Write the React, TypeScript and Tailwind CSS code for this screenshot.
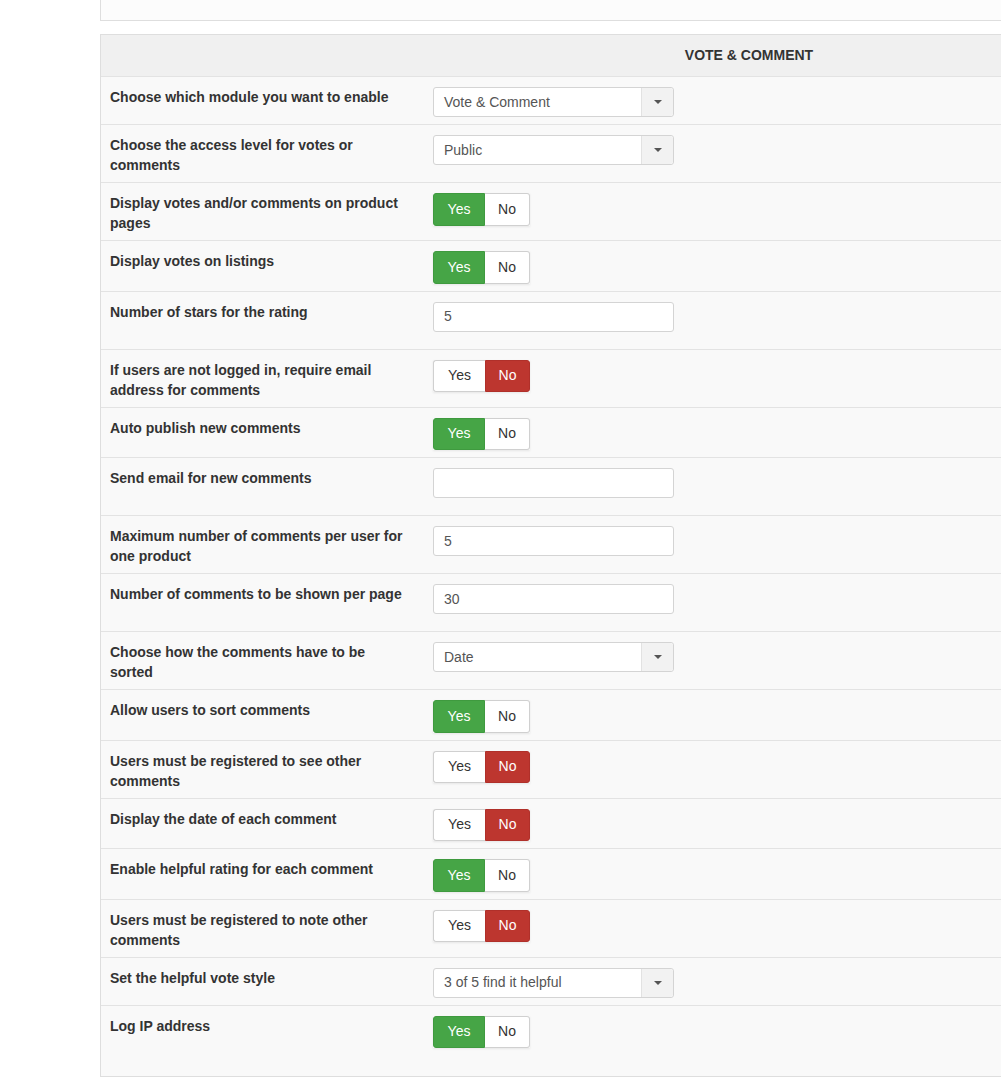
import React from 'react';

type Row =
  | { label: string; kind: 'select'; value: string }
  | { label: string; kind: 'input'; value: string }
  | { label: string; kind: 'toggle'; value: boolean };

const rows: Row[] = [
  { label: 'Choose which module you want to enable', kind: 'select', value: 'Vote & Comment' },
  { label: 'Choose the access level for votes or comments', kind: 'select', value: 'Public' },
  { label: 'Display votes and/or comments on product pages', kind: 'toggle', value: true },
  { label: 'Display votes on listings', kind: 'toggle', value: true },
  { label: 'Number of stars for the rating', kind: 'input', value: '5' },
  { label: 'If users are not logged in, require email address for comments', kind: 'toggle', value: false },
  { label: 'Auto publish new comments', kind: 'toggle', value: true },
  { label: 'Send email for new comments', kind: 'input', value: '' },
  { label: 'Maximum number of comments per user for one product', kind: 'input', value: '5' },
  { label: 'Number of comments to be shown per page', kind: 'input', value: '30' },
  { label: 'Choose how the comments have to be sorted', kind: 'select', value: 'Date' },
  { label: 'Allow users to sort comments', kind: 'toggle', value: true },
  { label: 'Users must be registered to see other comments', kind: 'toggle', value: false },
  { label: 'Display the date of each comment', kind: 'toggle', value: false },
  { label: 'Enable helpful rating for each comment', kind: 'toggle', value: true },
  { label: 'Users must be registered to note other comments', kind: 'toggle', value: false },
  { label: 'Set the helpful vote style', kind: 'select', value: '3 of 5 find it helpful' },
  { label: 'Log IP address', kind: 'toggle', value: true },
];

function Select({ value }: { value: string }) {
  return (
    <div className="flex h-[30px] w-[241px] rounded-[3px] border border-[#d4d4d4] bg-white">
      <div className="flex flex-1 items-center pl-[10px] text-[14px] text-[#555]">{value}</div>
      <div className="flex w-[32px] items-center justify-center rounded-r-[3px] border-l border-[#e2e2e2] bg-[#f2f2f2]">
        <svg width="8" height="4" viewBox="0 0 8 4">
          <path d="M0 0 L8 0 L4 4 Z" fill="#555" />
        </svg>
      </div>
    </div>
  );
}

function TextInput({ value }: { value: string }) {
  return (
    <div className="mb-[10px] flex h-[30px] w-[241px] items-center rounded-[3px] border border-[#d4d4d4] bg-white pl-[10px] text-[14px] text-[#555]">
      {value}
    </div>
  );
}

function Toggle({ on }: { on: boolean }) {
  return (
    <div className="flex h-[32.5px] text-[14px] shadow-[0_1px_2px_rgba(0,0,0,0.08)]">
      <div
        className={
          on
            ? 'flex w-[52px] items-center justify-center rounded-l-[3px] border border-[#3f9a3f] bg-[#46a546] text-white'
            : 'flex w-[52px] items-center justify-center rounded-l-[3px] border border-r-0 border-[#d0d0d0] bg-white text-[#333]'
        }
      >
        Yes
      </div>
      <div
        className={
          on
            ? 'flex w-[45px] items-center justify-center rounded-r-[3px] border border-l-0 border-[#d0d0d0] bg-white text-[#333]'
            : 'flex w-[45px] items-center justify-center rounded-r-[3px] border border-[#b0302a] bg-[#bd362f] text-white'
        }
      >
        No
      </div>
    </div>
  );
}

export default function App() {
  return (
    <div
      className="min-h-[1080px] w-full overflow-hidden bg-white text-[#333]"
      style={{ fontFamily: '"Liberation Sans", Arial, Helvetica, sans-serif' }}
    >
      <div className="ml-[100px] w-[1298px]">
        {/* previous panel, only its bottom is visible */}
        <div className="h-[21px] border-b border-l border-[#dedede] bg-[#fcfcfc]" />

        <div className="mt-[13px] border border-[#dedede] bg-[#f9f9f9] pb-[20px]">
          <div className="flex h-[41px] items-center justify-center bg-[#f0f0f0] text-[14px] font-bold">
            VOTE &amp; COMMENT
          </div>
          {rows.map((row, i) => (
            <div key={i} className="flex border-t border-[#e3e3e3] pt-[10px] pb-[7px]">
              <div className="w-[332px] pl-[9px] pr-[20px]">
                <div className="w-[296px] text-[14px] font-bold leading-[20px] text-[#333]">{row.label}</div>
              </div>
              <div>
                {row.kind === 'select' && <Select value={row.value} />}
                {row.kind === 'input' && <TextInput value={row.value} />}
                {row.kind === 'toggle' && <Toggle on={row.value} />}
              </div>
            </div>
          ))}
          <div className="h-px" />
        </div>
      </div>
    </div>
  );
}
